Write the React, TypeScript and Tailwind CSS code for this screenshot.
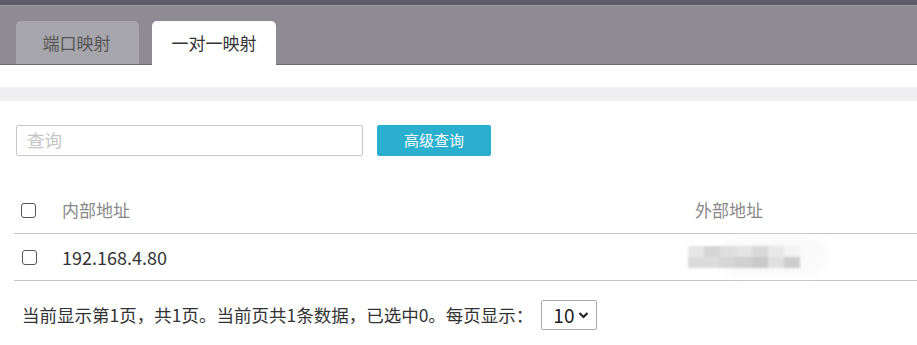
import React from "react";

const font = { fontFamily: '"Noto Sans CJK SC", "Noto Sans", sans-serif' };

function Box({ className = "" }: { className?: string }) {
  return <div className={"border border-[#555] rounded-[3px] bg-white " + className} />;
}

const tiles1 = ["#e6e6e6", "#d6d6d6", "#dedede", "#e4e4e4", "#d9d9d9", "#e8e8e8", "#f3f3f3"];
const tiles2 = ["#dadada", "#dcdcdc", "#d6d6d6", "#d0d0d0", "#cacaca", "#e0e0e0", "#cdcdcd"];

export default function App() {
  return (
    <div className="w-[917px] h-[345px] bg-white overflow-hidden" style={font}>
      <div className="h-[5px] bg-[#5f5d69]" />
      <div className="h-[60px] bg-[#8e8b94] border-b border-[#6e6c72] flex items-end pl-[16px] gap-[13px] border-t border-t-[#9a98a0]">
        <div className="w-[123px] h-[43px] bg-[#a8a6ad] rounded-t-[5px] flex items-center justify-center text-[17px] text-[#555] pr-[2px]">
          端口映射
        </div>
        <div className="w-[124px] h-[44px] -mb-[1px] bg-white rounded-t-[5px] flex items-center justify-center text-[17px] text-[#333]">
          一对一映射
        </div>
      </div>
      <div className="h-[22px]" />
      <div className="h-[14px] bg-[#efeff1]" />
      <div className="flex items-center pl-[16px] pt-[24px] gap-[14px]">
        <div className="w-[347px] h-[31px] border border-[#c8c8c8] rounded-[2px] flex items-center pl-[10px] text-[17.5px] text-[#c4c4c4]">
          查询
        </div>
        <div className="w-[114px] h-[31px] bg-[#2aafcf] rounded-[2px] flex items-center justify-center text-[15px] text-white">
          高级查询
        </div>
      </div>
      <div className="mt-[31px] pl-[14px]">
        <div className="h-[47px] flex items-center border-b border-[#c6c6c6] text-[17px] text-[#888]">
          <div className="w-[48px] pl-[7px]">
            <Box className="w-[15px] h-[15px]" />
          </div>
          <div className="w-[633px]">内部地址</div>
          <div>外部地址</div>
        </div>
        <div className="h-[47px] flex items-center border-b border-[#c6c6c6] text-[18px] text-[#333]">
          <div className="w-[48px] pl-[8px]">
            <Box className="w-[15px] h-[15px]" />
          </div>
          <div className="w-[626px]">192.168.4.80</div>
          <div className="relative w-[140px] h-[30px]">
            <div className="absolute left-[30px] top-[-4px] w-[110px] h-[38px] rounded-full bg-[#fafafa] blur-[3px]" />
            <div className="absolute left-0 top-[4px] flex flex-col blur-[1px]">
              <div className="flex">
                {tiles1.map((c, i) => (
                  <div key={i} className="w-[16px] h-[11px]" style={{ background: c }} />
                ))}
              </div>
              <div className="flex">
                {tiles2.map((c, i) => (
                  <div key={i} className="w-[16px] h-[11px]" style={{ background: c }} />
                ))}
              </div>
            </div>
          </div>
        </div>
      </div>
      <div className="flex items-center pl-[22px] pt-[19px] text-[17.5px] text-[#333]">
        <span>当前显示第1页，共1页。当前页共1条数据，已选中0。每页显示：</span>
        <div className="ml-[8px] w-[56px] h-[30px] border border-[#a9a9a9] rounded-[2px] flex items-center pl-[11px] gap-[4px] text-[19px] text-[#222]">
          <span>10</span>
          <svg width="11" height="8" viewBox="0 0 11 8">
            <path d="M1.5 2 L5.5 6 L9.5 2" stroke="#222" strokeWidth="2.2" fill="none" />
          </svg>
        </div>
      </div>
    </div>
  );
}
